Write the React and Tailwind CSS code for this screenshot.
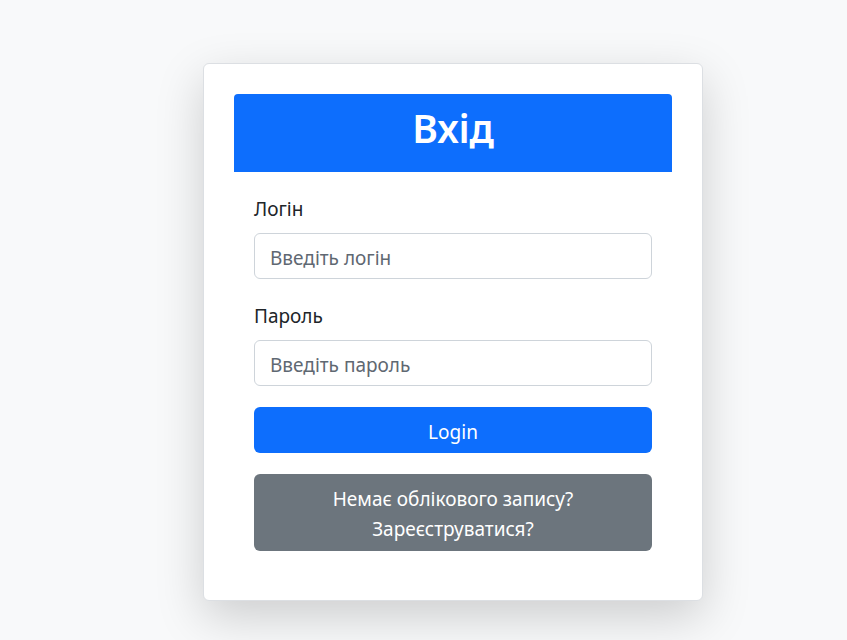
export default function App() {
  const font = { fontFamily: '"Noto Sans", "Open Sans", sans-serif' };
  return (
    <div className="min-h-screen w-full bg-[#f8f9fa] pt-[63px] pl-[203px]" style={font}>
      <div className="w-[500px] rounded-[6px] border border-[#dcdfe3] bg-white p-[30px] shadow-[0_16px_48px_rgba(0,0,0,0.175)]">
        <div className="rounded-t-[4px] bg-[#0d6efd] pt-[10px] pb-[20px] text-center">
          <h1 className="text-[39px] font-semibold leading-[48px] tracking-[-0.3px] text-white">Вхід</h1>
        </div>
        <form className="flex flex-col px-[20px] pt-[23px] pb-[19px]" onSubmit={(e) => e.preventDefault()}>
          <label className="mb-[10px] text-[19px] leading-[28px] text-[#212529]">Логін</label>
          <input
            type="text"
            placeholder="Введіть логін"
            className="h-[46px] w-full rounded-[6px] border border-[#ced4da] bg-white px-[15px] pt-[3px] text-[19px] leading-[28px] text-[#212529] outline-none placeholder:text-[#5f6872]"
          />
          <label className="mt-[23px] mb-[10px] text-[19px] leading-[28px] text-[#212529]">Пароль</label>
          <input
            type="password"
            placeholder="Введіть пароль"
            className="h-[46px] w-full rounded-[6px] border border-[#ced4da] bg-white px-[15px] pt-[3px] text-[19px] leading-[28px] text-[#212529] outline-none placeholder:text-[#5f6872]"
          />
          <button
            type="submit"
            className="mt-[21px] flex h-[46px] w-full items-center justify-center rounded-[6px] bg-[#0d6efd] pt-[3px] text-[19px] leading-[28px] text-white"
          >
            Login
          </button>
          <button
            type="button"
            className="mt-[21px] w-full rounded-[6px] bg-[#6c757d] pt-[10px] pb-[7px] text-center text-[19px] leading-[30px] text-white"
          >
            Немає облікового запису?
            <br />
            Зареєструватися?
          </button>
        </form>
      </div>
    </div>
  );
}
